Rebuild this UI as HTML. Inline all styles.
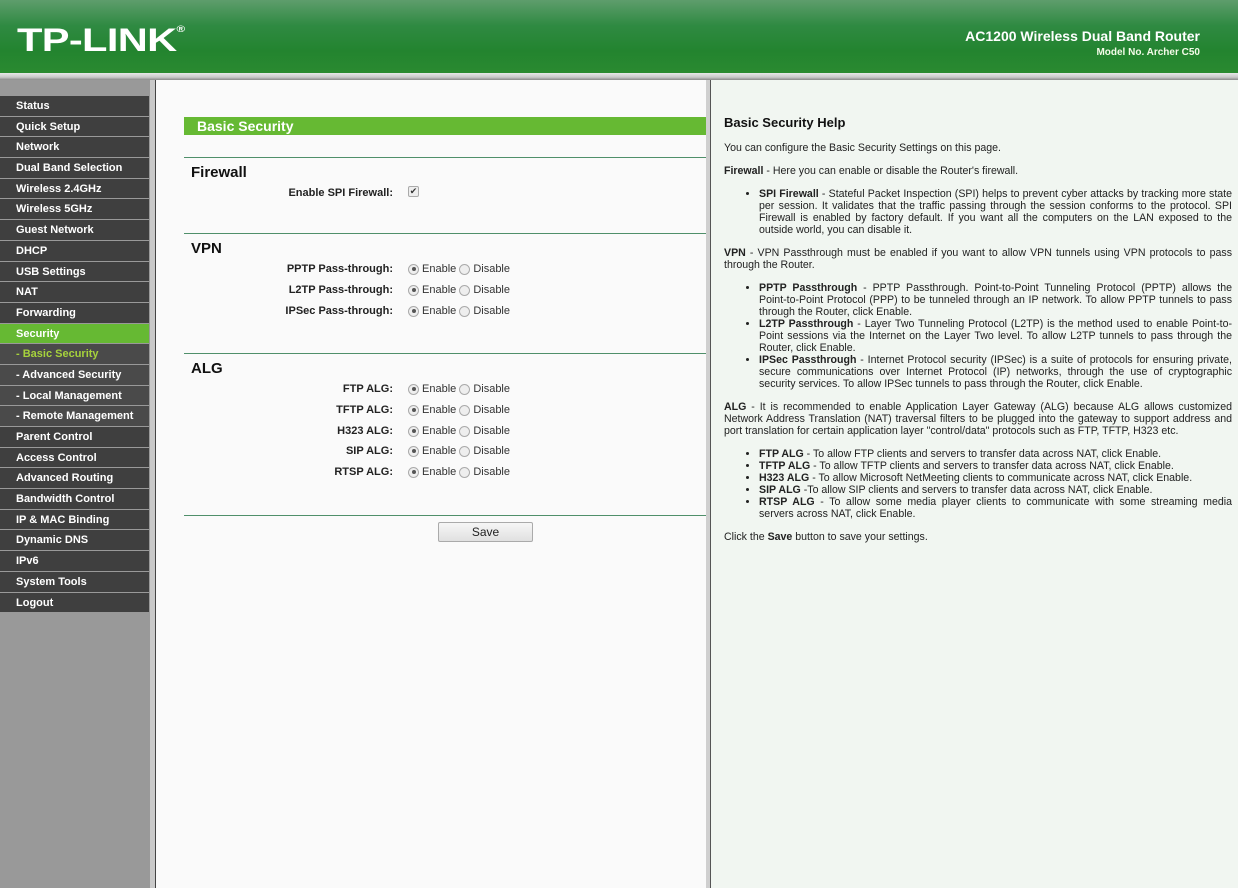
<!DOCTYPE html>
<html><head><meta charset="utf-8">
<style>
*{margin:0;padding:0;box-sizing:border-box}
body{width:1238px;height:888px;overflow:hidden;font-family:"Liberation Sans",Arial,sans-serif;background:#fafafa;position:relative}
#hdr{position:absolute;left:0;top:0;width:1238px;height:73px;background:linear-gradient(180deg,#5e9d6c 0%,#2f8a42 35%,#23842f 70%,#2a8a30 100%);overflow:hidden}
#hdr .logo{position:absolute;left:17px;top:22px;color:#fff;font-weight:bold;font-size:32px;letter-spacing:-0.5px;transform:scaleX(1.3);transform-origin:left}
#hdr .logo sup{font-size:9px;vertical-align:top;position:relative;top:2px}
#hdr .t1{position:absolute;right:38px;top:28px;color:#fff;font-weight:bold;font-size:14px}
#hdr .t2{position:absolute;right:38px;top:47px;color:#f4fbe8;font-weight:bold;font-size:10px}
#strip{position:absolute;left:0;top:73px;width:1238px;height:7px;background:linear-gradient(#e8e8e8,#c8c8c8 60%,#888)}
#side{position:absolute;left:0;top:80px;width:150px;height:808px;background:#999}
#sep1{position:absolute;left:150px;top:80px;width:6px;height:808px;background:#c9c9c9;border-right:1px solid #444}
#menu{position:absolute;left:0;top:96px;width:149px}
#menu div{height:19.7px;margin-bottom:1px;background:#3f3f3f;color:#fff;font-weight:bold;font-size:11px;line-height:20px;padding-left:16px}
#menu div.act{background:#66b933}
#menu div.sub{background:#4a4a4a}
#menu div.cur{color:#a6d23c}
#main{position:absolute;left:156px;top:80px;width:550px;height:808px;background:#fafafa}
#sep2{position:absolute;left:706px;top:80px;width:5px;height:808px;background:#cfcfcf;border-right:1px solid #555}
#help{position:absolute;left:711px;top:80px;width:527px;height:808px;background:#f1f6f1}
.bar{position:absolute;left:184px;top:117px;width:523px;height:18px;background:#66b933;color:#fff;font-weight:bold;font-size:14px;line-height:18px;padding-left:13px}
.hl{position:absolute;left:184px;width:523px;height:1px;background:#4f8f6a}
.sec{position:absolute;left:191px;font-weight:bold;font-size:15px;color:#111}
.lbl{position:absolute;width:210px;left:183px;text-align:right;font-weight:bold;font-size:11px;color:#222}
.val{position:absolute;left:408px;font-size:11px;color:#333;display:flex;align-items:center}
.r{display:inline-block;width:11px;height:11px;border-radius:50%;border:1px solid #aaa;background:#eee;margin-right:3px;position:relative}
.r.on::after{content:"";position:absolute;left:2.5px;top:2.5px;width:4px;height:4px;border-radius:50%;background:#555}
.cb{display:inline-block;width:11px;height:11px;border:1px solid #aaa;background:#eee;border-radius:2px;font-size:9px;line-height:9px;text-align:center;color:#333}
.btn{position:absolute;left:438px;top:522px;width:95px;height:20px;border:1px solid #aaa;background:linear-gradient(#f6f6f6,#e0e0e0);font-size:12px;text-align:center;line-height:18px;color:#222;border-radius:2px}
#help .in{position:absolute;left:13px;top:35px;width:508px;font-size:10.6px;color:#222;line-height:12px;text-align:justify}
#help h2{font-size:13px;font-weight:bold;margin-bottom:13px;margin-top:2px;color:#111}
#help p{margin-bottom:11px}
#help ul{margin:0 0 11px 35px}
</style></head><body>
<div id="hdr">
<div class="logo">TP-LINK<sup>®</sup></div>
<div class="t1">AC1200 Wireless Dual Band Router</div>
<div class="t2">Model No. Archer C50</div>
</div>
<div id="strip"></div>
<div id="side"></div>
<div id="menu">
<div>Status</div><div>Quick Setup</div><div>Network</div><div>Dual Band Selection</div><div>Wireless 2.4GHz</div><div>Wireless 5GHz</div><div>Guest Network</div><div>DHCP</div><div>USB Settings</div><div>NAT</div><div>Forwarding</div><div class="act">Security</div><div class="sub cur">- Basic Security</div><div class="sub">- Advanced Security</div><div class="sub">- Local Management</div><div class="sub">- Remote Management</div><div>Parent Control</div><div>Access Control</div><div>Advanced Routing</div><div>Bandwidth Control</div><div>IP &amp; MAC Binding</div><div>Dynamic DNS</div><div>IPv6</div><div>System Tools</div><div>Logout</div>
</div>
<div id="sep1"></div>
<div id="main"></div>
<div class="bar">Basic Security</div>
<div class="hl" style="top:157px"></div>
<div class="sec" style="top:164px">Firewall</div>
<div class="lbl" style="top:187px">Enable SPI Firewall:</div>
<div class="val" style="top:186px"><span class="cb">✔</span></div>
<div class="hl" style="top:233px"></div>
<div class="sec" style="top:240px">VPN</div>
<div class="lbl" style="top:263px">PPTP Pass-through:</div>
<div class="val" style="top:263px"><span class="r on"></span>Enable&nbsp;<span class="r"></span>Disable</div>
<div class="lbl" style="top:284px">L2TP Pass-through:</div>
<div class="val" style="top:284px"><span class="r on"></span>Enable&nbsp;<span class="r"></span>Disable</div>
<div class="lbl" style="top:305px">IPSec Pass-through:</div>
<div class="val" style="top:305px"><span class="r on"></span>Enable&nbsp;<span class="r"></span>Disable</div>
<div class="hl" style="top:353px"></div>
<div class="sec" style="top:360px">ALG</div>
<div class="lbl" style="top:383px">FTP ALG:</div>
<div class="val" style="top:383px"><span class="r on"></span>Enable&nbsp;<span class="r"></span>Disable</div>
<div class="lbl" style="top:404px">TFTP ALG:</div>
<div class="val" style="top:404px"><span class="r on"></span>Enable&nbsp;<span class="r"></span>Disable</div>
<div class="lbl" style="top:425px">H323 ALG:</div>
<div class="val" style="top:425px"><span class="r on"></span>Enable&nbsp;<span class="r"></span>Disable</div>
<div class="lbl" style="top:445px">SIP ALG:</div>
<div class="val" style="top:445px"><span class="r on"></span>Enable&nbsp;<span class="r"></span>Disable</div>
<div class="lbl" style="top:466px">RTSP ALG:</div>
<div class="val" style="top:466px"><span class="r on"></span>Enable&nbsp;<span class="r"></span>Disable</div>
<div class="hl" style="top:515px"></div>
<div class="btn">Save</div>
<div id="sep2"></div>
<div id="help"><div class="in">
<h2>Basic Security Help</h2>
<p>You can configure the Basic Security Settings on this page.</p>
<p><b>Firewall</b> - Here you can enable or disable the Router's firewall.</p>
<ul><li><b>SPI Firewall</b> - Stateful Packet Inspection (SPI) helps to prevent cyber attacks by tracking more state per session. It validates that the traffic passing through the session conforms to the protocol. SPI Firewall is enabled by factory default. If you want all the computers on the LAN exposed to the outside world, you can disable it.</li></ul>
<p><b>VPN</b> - VPN Passthrough must be enabled if you want to allow VPN tunnels using VPN protocols to pass through the Router.</p>
<ul><li><b>PPTP Passthrough</b> - PPTP Passthrough. Point-to-Point Tunneling Protocol (PPTP) allows the Point-to-Point Protocol (PPP) to be tunneled through an IP network. To allow PPTP tunnels to pass through the Router, click Enable.</li>
<li><b>L2TP Passthrough</b> - Layer Two Tunneling Protocol (L2TP) is the method used to enable Point-to-Point sessions via the Internet on the Layer Two level. To allow L2TP tunnels to pass through the Router, click Enable.</li>
<li><b>IPSec Passthrough</b> - Internet Protocol security (IPSec) is a suite of protocols for ensuring private, secure communications over Internet Protocol (IP) networks, through the use of cryptographic security services. To allow IPSec tunnels to pass through the Router, click Enable.</li></ul>
<p><b>ALG</b> - It is recommended to enable Application Layer Gateway (ALG) because ALG allows customized Network Address Translation (NAT) traversal filters to be plugged into the gateway to support address and port translation for certain application layer "control/data" protocols such as FTP, TFTP, H323 etc.</p>
<ul><li><b>FTP ALG</b> - To allow FTP clients and servers to transfer data across NAT, click Enable.</li>
<li><b>TFTP ALG</b> - To allow TFTP clients and servers to transfer data across NAT, click Enable.</li>
<li><b>H323 ALG</b> - To allow Microsoft NetMeeting clients to communicate across NAT, click Enable.</li>
<li><b>SIP ALG</b> -To allow SIP clients and servers to transfer data across NAT, click Enable.</li>
<li><b>RTSP ALG</b> - To allow some media player clients to communicate with some streaming media servers across NAT, click Enable.</li></ul>
<p>Click the <b>Save</b> button to save your settings.</p>
</div></div>
</body></html>
